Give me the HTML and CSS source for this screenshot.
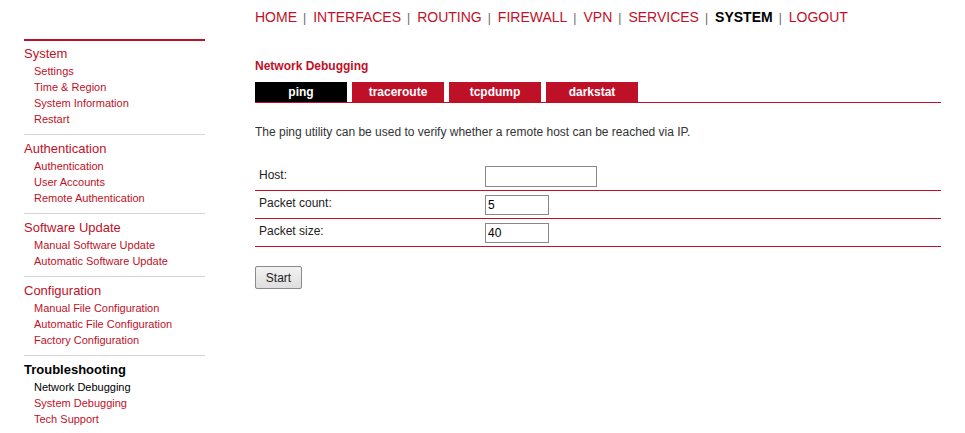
FILE: index.html
```html
<!DOCTYPE html>
<html lang="en">
<head>
  <meta charset="UTF-8" />
  <meta name="viewport" content="width=device-width, initial-scale=1.0" />
  <title>Network Debugging</title>
  <link rel="stylesheet" href="styles.css">
</head>
<body>
  <div class="page">
    <div class="sidebar">
      <div class="group">
        <div class="group-title">System</div>
        <a href="#">Settings</a>
        <a href="#">Time &amp; Region</a>
        <a href="#">System Information</a>
        <a href="#">Restart</a>
      </div>
      <div class="group">
        <div class="group-title">Authentication</div>
        <a href="#">Authentication</a>
        <a href="#">User Accounts</a>
        <a href="#">Remote Authentication</a>
      </div>
      <div class="group">
        <div class="group-title">Software Update</div>
        <a href="#">Manual Software Update</a>
        <a href="#">Automatic Software Update</a>
      </div>
      <div class="group">
        <div class="group-title">Configuration</div>
        <a href="#">Manual File Configuration</a>
        <a href="#">Automatic File Configuration</a>
        <a href="#">Factory Configuration</a>
      </div>
      <div class="group last">
        <div class="group-title active">Troubleshooting</div>
        <a href="#" class="active">Network Debugging</a>
        <a href="#">System Debugging</a>
        <a href="#">Tech Support</a>
      </div>
    </div>

    <div class="main">
      <div class="topnav">
        <a href="#">HOME</a><span class="sep">|</span><a href="#">INTERFACES</a><span class="sep">|</span><a href="#">ROUTING</a><span class="sep">|</span><a href="#">FIREWALL</a><span class="sep">|</span><a href="#">VPN</a><span class="sep">|</span><a href="#">SERVICES</a><span class="sep">|</span><a href="#" class="current">SYSTEM</a><span class="sep">|</span><a href="#">LOGOUT</a>
      </div>

      <h1>Network Debugging</h1>
      <div class="tabs">
        <a href="#" class="tab selected">ping</a>
        <a href="#" class="tab">traceroute</a>
        <a href="#" class="tab">tcpdump</a>
        <a href="#" class="tab">darkstat</a>
      </div>

      <p class="intro">The ping utility can be used to verify whether a remote host can be reached via IP.</p>

      <form id="ping-form">
        <table class="fields">
          <tr>
            <td class="label">Host:</td>
            <td><input type="text" class="host"></td>
          </tr>
          <tr>
            <td class="label">Packet count:</td>
            <td><input type="text" class="short" value="5"></td>
          </tr>
          <tr>
            <td class="label">Packet size:</td>
            <td><input type="text" class="short" value="40"></td>
          </tr>
        </table>
        <button type="submit">Start</button>
      </form>
    </div>
  </div>
</body>
</html>
```

FILE: styles.css
```css
body {
  font-family: "Liberation Sans", Arial, sans-serif;
  background: white;
  color: #333;
  margin: 0;
}
a {
  color: #be1128;
  text-decoration: none;
}
.page {
  display: flex;
  align-items: flex-start;
}
.sidebar {
  width: 181px;
  margin-left: 24px;
  margin-top: 39px;
  border-top: 2px solid #be1128;
}
.group {
  padding: 6px 0 7px 0;
  border-bottom: 1px solid #d4d4d4;
}
.group:first-child {
  padding-top: 5px;
}
.group.last {
  border-bottom: none;
}
.group-title {
  font-size: 13px;
  line-height: 16px;
  color: #be1128;
  margin-bottom: 1px;
}
.group-title.active {
  color: #000;
  font-weight: bold;
}
.group a {
  display: block;
  font-size: 11px;
  line-height: 16px;
  padding-left: 10px;
}
.group a.active {
  color: #000;
}
.main {
  margin-left: 50px;
  width: 686px;
}
.topnav {
  padding-top: 8px;
  font-size: 14px;
  line-height: 18px;
  white-space: nowrap;
}
.topnav .sep {
  color: #666;
  font-size: 12px;
  margin: 0 7px 0 6px;
}
.topnav a.current {
  color: #000;
  font-weight: bold;
}
h1 {
  font-size: 12px;
  line-height: 16px;
  color: #be1128;
  margin: 31px 0 8px 0;
}
.tabs {
  display: flex;
  gap: 5px;
  border-bottom: 1px solid #be1128;
}
.tab {
  width: 92px;
  height: 20px;
  line-height: 20px;
  text-align: center;
  font-size: 12px;
  font-weight: bold;
  color: white;
  background: #be1128;
}
.tab.selected {
  background: #000;
}
.intro {
  font-size: 12px;
  line-height: 16px;
  margin: 21px 0 23px 0;
}
.fields {
  width: 100%;
  border-collapse: collapse;
}
.fields td {
  padding: 3px 0 3px 0;
  vertical-align: top;
  border-bottom: 1px solid #be1128;
}
.fields td.label {
  width: 230px;
  padding-left: 4px;
  padding-top: 4px;
  font-size: 12px;
  line-height: 16px;
  color: #222;
  box-sizing: border-box;
}
input {
  display: block;
  font-family: "Liberation Sans", Arial, sans-serif;
  font-size: 12px;
  border: 1px solid #888;
  padding: 0 2px;
  margin: 0;
  height: 20px;
  box-sizing: border-box;
  color: #000;
}
input.host {
  width: 112px;
  height: 21px;
}
input.short {
  width: 64px;
  margin-top: 1px;
}
button {
  margin-top: 19px;
  width: 47px;
  height: 23px;
  font-family: "Liberation Sans", Arial, sans-serif;
  font-size: 12px;
  color: #222;
  background: linear-gradient(#f2f2f2, #dedede);
  border: 1px solid #8a8a8a;
  border-radius: 2px;
  cursor: pointer;
}
```
